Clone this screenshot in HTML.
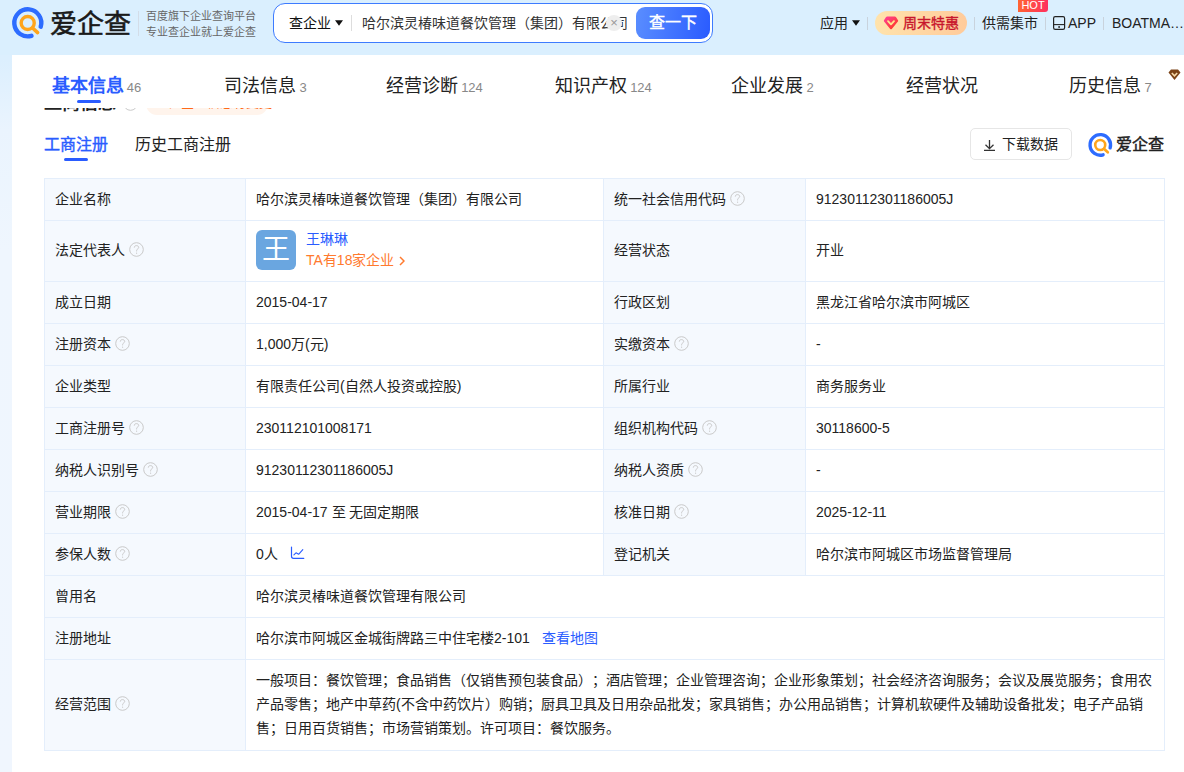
<!DOCTYPE html>
<html lang="zh-CN"><head><meta charset="utf-8">
<style>
*{box-sizing:border-box;margin:0;padding:0}
html,body{width:1184px;height:772px;overflow:hidden}
body{font-family:"Liberation Sans",sans-serif;font-size:14px;text-spacing-trim:space-all;color:#333;background:linear-gradient(180deg,#DAEFFE 0px,#DCEFFE 60px,#EAF4FE 130px,#EFF6FE 250px,#F0F6FE 772px);position:relative}
.abs{position:absolute;white-space:nowrap}
.hdr{position:absolute;left:0;top:0;width:1184px;height:55px;background:#DAEFFE}
.tag{left:146px;font-size:11px;color:#666;line-height:16px}
.search{left:273px;top:3px;width:440px;height:40px;border:1px solid #3D7BFF;border-radius:12px;background:#fff}
.btn{position:absolute;left:362px;top:3px;width:74px;height:32px;border-radius:9px;background:linear-gradient(100deg,#5A8EFF,#2A5BFF);color:#fff;font-size:16px;line-height:32px;text-align:center;-webkit-text-stroke:0.4px #fff}
.vd{position:absolute;width:1px;background:#C9D3DD}
.nav{top:14px;line-height:18px;color:#222;font-size:14px}
.card{position:absolute;left:12px;top:55px;width:1190px;height:720px;background:#fff}
.tabs{position:absolute;left:0;top:0;width:1184px;height:53px;background:#fff;z-index:2}
.tab{position:absolute;top:20px;width:169px;text-align:center;font-size:18px;line-height:22px;color:#222}
.tab small{font-size:13px;color:#888;margin-left:3px}
.tab.on{color:#2A5CFF;font-weight:bold}
table{position:absolute;left:32px;top:123px;border-collapse:collapse;table-layout:fixed;width:1120px}
td{border:1px solid #E4EEFB;padding:0 10px 2px;vertical-align:middle;line-height:20px;color:#222;white-space:nowrap}
td.l{background:#F5F9FE}
.q{display:inline-block;vertical-align:-2px;margin-left:4px}
</style></head><body>
<div class="hdr"></div>
<!-- logo -->
<svg class="abs" style="left:0;top:0" width="50" height="45" viewBox="0 0 50 45">
 <path d="M31.5 35.8 A13.5 13.5 0 1 1 40.7 26.75" fill="none" stroke="#2D6CFF" stroke-width="4.4" stroke-linecap="round"/>
 <circle cx="27.7" cy="23" r="6.55" fill="none" stroke="#FFA51C" stroke-width="3.4"/>
 <path d="M32.6 28 L37.6 32.6" stroke="#FFA51C" stroke-width="3.6" stroke-linecap="round"/>
</svg>
<div class="abs" style="left:50px;top:7px;font-size:27px;line-height:34px;color:#1A1A1A;-webkit-text-stroke:0.6px #1A1A1A;transform:scaleY(0.95);transform-origin:0 100%">爱企查</div>
<div class="vd" style="left:138px;top:11px;height:25px;background:#D3DDE8"></div>
<div class="abs tag" style="top:8px">百度旗下企业查询平台</div>
<div class="abs tag" style="top:24px">专业查企业就上爱企查</div>

<div class="abs search">
  <div class="abs" style="left:15px;top:10px;line-height:18px;color:#111">查企业</div>
  <div class="abs" style="left:61px;top:16px;line-height:0"><svg width="8" height="6" viewBox="0 0 8 6"><path d="M0 0.2 H8 L4 5.8 Z" fill="#111"/></svg></div>
  <div class="vd" style="left:77px;top:11px;height:16px;background:#DDD"></div>
  <div class="abs" style="left:88px;top:9px;line-height:20px;color:#333;width:265px;overflow:hidden">哈尔滨灵椿味道餐饮管理（集团）有限公司</div>
  <div class="abs" style="left:332px;top:11px;width:16px;height:16px;border-radius:50%;background:#EEE;color:#999;font-size:13px;line-height:16px;text-align:center">×</div>
  <div class="btn">查一下</div>
</div>

<div class="abs nav" style="left:820px">应用</div>
<div class="abs" style="left:852px;top:20px;line-height:0"><svg width="8" height="6" viewBox="0 0 8 6"><path d="M0 0.2 H8 L4 5.8 Z" fill="#111"/></svg></div>
<div class="vd" style="left:867px;top:17px;height:13px"></div>
<div class="abs" style="left:875px;top:11px;width:92px;height:24px;border-radius:12px;background:linear-gradient(90deg,#FFE3AC,#FFCB9B)"></div>
<svg class="abs" style="left:883px;top:16px" width="16" height="14" viewBox="0 0 16 14"><defs><linearGradient id="dg" x1="0" y1="0" x2="1" y2="1"><stop offset="0" stop-color="#FF3FA0"/><stop offset="1" stop-color="#FF3A10"/></linearGradient></defs><path d="M4.2 0.6 H11.8 Q12.6 0.6 13.1 1.3 L15 4.2 Q15.4 4.9 14.9 5.5 L8.8 12.9 Q8 13.8 7.2 12.9 L1.1 5.5 Q0.6 4.9 1 4.2 L2.9 1.3 Q3.4 0.6 4.2 0.6 Z" fill="url(#dg)"/><path d="M5 5.2 L8 8.4 L11 5.2" fill="none" stroke="#FFE68A" stroke-width="1.8" stroke-linecap="round" stroke-linejoin="round"/></svg>
<div class="abs nav" style="left:903px;color:#C8162C;-webkit-text-stroke:0.35px #C8162C">周末特惠</div>
<div class="vd" style="left:974px;top:17px;height:13px"></div>
<div class="abs nav" style="left:982px">供需集市</div>
<div class="abs" style="left:1018px;top:0;width:30px;height:12px;background:linear-gradient(90deg,#FF6433,#FF2F5F);border-radius:0 0 3px 0;color:#fff;font-size:11px;line-height:10px;text-align:center">HOT</div>
<div class="vd" style="left:1045px;top:17px;height:13px"></div>
<svg class="abs" style="left:1052px;top:16px" width="14" height="14" viewBox="0 0 14 14"><rect x="1.6" y="0.6" width="11" height="12.8" rx="1.6" fill="none" stroke="#222" stroke-width="1.2"/><line x1="1.6" y1="8.6" x2="12.6" y2="8.6" stroke="#222" stroke-width="1.1"/><circle cx="7.1" cy="11" r="0.9" fill="#222"/></svg>
<div class="abs nav" style="left:1068px">APP</div>
<div class="vd" style="left:1103px;top:17px;height:13px"></div>
<div class="abs nav" style="left:1112px">BOATMA…</div>

<div class="card">
  <!-- hidden section title -->
  <div class="abs" style="left:32px;top:37px;font-size:18px;line-height:22px;font-weight:bold;color:#222">工商信息</div>
  <div class="abs" style="left:134px;top:38px;width:122px;height:22px;border-radius:11px;background:#FFF4EC"></div><div class="abs" style="left:152px;top:39px;font-size:13px;line-height:18px;color:#FF6A1A;width:112px;overflow:hidden">◆ 企业信息有变更 ›</div><svg class="abs" style="left:111px;top:41px" width="15" height="15" viewBox="0 0 15 15"><circle cx="7.5" cy="7.5" r="6.8" fill="none" stroke="#C9C9C9" stroke-width="1"/></svg>

  <div class="abs" style="left:32px;top:79px;font-size:16px;line-height:22px;color:#2A5CFF;-webkit-text-stroke:0.4px #2A5CFF">工商注册</div>
  <div class="abs" style="left:52px;top:103px;width:24px;height:3px;border-radius:2px;background:#2A5CFF"></div>
  <div class="abs" style="left:123px;top:79px;font-size:16px;line-height:22px;color:#222">历史工商注册</div>
  <div class="abs" style="left:958px;top:73px;width:102px;height:32px;border:1px solid #E6E6E6;border-radius:5px;background:#fff"></div>
  <svg class="abs" style="left:971px;top:85px" width="13" height="11" viewBox="0 0 13 11"><path d="M6.5 0 V8.5 M2.5 4.8 L6.5 8.6 L10.5 4.8 M1 10.3 H12" fill="none" stroke="#333" stroke-width="1.3"/></svg>
  <div class="abs" style="left:990px;top:79px;font-size:14px;line-height:20px;color:#222">下载数据</div>
  <svg class="abs" style="left:1064px;top:73px" width="50" height="45" viewBox="0 0 50 45">
 <g transform="translate(24.3 16.9) scale(0.76) translate(-27.8 -22.8)">
 <path d="M31.5 35.8 A13.5 13.5 0 1 1 40.7 26.75" fill="none" stroke="#2D6CFF" stroke-width="4.4" stroke-linecap="round"/>
 <circle cx="27.7" cy="23" r="6.55" fill="none" stroke="#FFA51C" stroke-width="3.4"/>
 <path d="M32.6 28 L37.6 32.6" stroke="#FFA51C" stroke-width="3.6" stroke-linecap="round"/>
 </g>
</svg>
  <div class="abs" style="left:1104px;top:78px;font-size:16px;line-height:24px;color:#222;-webkit-text-stroke:0.45px #222">爱企查</div>
<table><colgroup><col style="width:201px"><col style="width:358px"><col style="width:202px"><col style="width:359px"></colgroup>
<tr style="height:42px"><td class="l">企业名称</td><td>哈尔滨灵椿味道餐饮管理（集团）有限公司</td><td class="l">统一社会信用代码<svg class="q" width="15" height="15" viewBox="0 0 15 15"><circle cx="7.5" cy="7.5" r="6.8" fill="none" stroke="#C9C9C9" stroke-width="1"/><path d="M5.3 5.6 C5.3 4.2 6.3 3.6 7.5 3.6 C8.8 3.6 9.7 4.4 9.7 5.5 C9.7 6.9 7.6 7 7.6 8.6 V9.4" fill="none" stroke="#C9C9C9" stroke-width="1"/><circle cx="7.6" cy="11.2" r="0.6" fill="#C9C9C9"/></svg></td><td>91230112301186005J</td></tr>
<tr style="height:61px"><td class="l">法定代表人<svg class="q" width="15" height="15" viewBox="0 0 15 15"><circle cx="7.5" cy="7.5" r="6.8" fill="none" stroke="#C9C9C9" stroke-width="1"/><path d="M5.3 5.6 C5.3 4.2 6.3 3.6 7.5 3.6 C8.8 3.6 9.7 4.4 9.7 5.5 C9.7 6.9 7.6 7 7.6 8.6 V9.4" fill="none" stroke="#C9C9C9" stroke-width="1"/><circle cx="7.6" cy="11.2" r="0.6" fill="#C9C9C9"/></svg></td><td><div style="position:relative;height:40px"><div class="abs" style="left:0;top:0;width:40px;height:40px;border-radius:6px;background:#6AA6E0;color:#fff;font-size:28px;line-height:40px;text-align:center">王</div><div class="abs" style="left:50px;top:-1px;line-height:20px;color:#2A5CFF">王琳琳</div><div class="abs" style="left:50px;top:20px;line-height:20px;color:#FF7A2E">TA有18家企业<svg style="margin-left:5px;vertical-align:-1px" width="6" height="10" viewBox="0 0 6 10"><path d="M1 1 L5 5 L1 9" fill="none" stroke="#FF7A2E" stroke-width="1.5"/></svg></div></div></td><td class="l">经营状态</td><td>开业</td></tr>
<tr style="height:42px"><td class="l">成立日期</td><td>2015-04-17</td><td class="l">行政区划</td><td>黑龙江省哈尔滨市阿城区</td></tr>
<tr style="height:42px"><td class="l">注册资本<svg class="q" width="15" height="15" viewBox="0 0 15 15"><circle cx="7.5" cy="7.5" r="6.8" fill="none" stroke="#C9C9C9" stroke-width="1"/><path d="M5.3 5.6 C5.3 4.2 6.3 3.6 7.5 3.6 C8.8 3.6 9.7 4.4 9.7 5.5 C9.7 6.9 7.6 7 7.6 8.6 V9.4" fill="none" stroke="#C9C9C9" stroke-width="1"/><circle cx="7.6" cy="11.2" r="0.6" fill="#C9C9C9"/></svg></td><td>1,000万(元)</td><td class="l">实缴资本<svg class="q" width="15" height="15" viewBox="0 0 15 15"><circle cx="7.5" cy="7.5" r="6.8" fill="none" stroke="#C9C9C9" stroke-width="1"/><path d="M5.3 5.6 C5.3 4.2 6.3 3.6 7.5 3.6 C8.8 3.6 9.7 4.4 9.7 5.5 C9.7 6.9 7.6 7 7.6 8.6 V9.4" fill="none" stroke="#C9C9C9" stroke-width="1"/><circle cx="7.6" cy="11.2" r="0.6" fill="#C9C9C9"/></svg></td><td>-</td></tr>
<tr style="height:42px"><td class="l">企业类型</td><td>有限责任公司(自然人投资或控股)</td><td class="l">所属行业</td><td>商务服务业</td></tr>
<tr style="height:42px"><td class="l">工商注册号<svg class="q" width="15" height="15" viewBox="0 0 15 15"><circle cx="7.5" cy="7.5" r="6.8" fill="none" stroke="#C9C9C9" stroke-width="1"/><path d="M5.3 5.6 C5.3 4.2 6.3 3.6 7.5 3.6 C8.8 3.6 9.7 4.4 9.7 5.5 C9.7 6.9 7.6 7 7.6 8.6 V9.4" fill="none" stroke="#C9C9C9" stroke-width="1"/><circle cx="7.6" cy="11.2" r="0.6" fill="#C9C9C9"/></svg></td><td>230112101008171</td><td class="l">组织机构代码<svg class="q" width="15" height="15" viewBox="0 0 15 15"><circle cx="7.5" cy="7.5" r="6.8" fill="none" stroke="#C9C9C9" stroke-width="1"/><path d="M5.3 5.6 C5.3 4.2 6.3 3.6 7.5 3.6 C8.8 3.6 9.7 4.4 9.7 5.5 C9.7 6.9 7.6 7 7.6 8.6 V9.4" fill="none" stroke="#C9C9C9" stroke-width="1"/><circle cx="7.6" cy="11.2" r="0.6" fill="#C9C9C9"/></svg></td><td>30118600-5</td></tr>
<tr style="height:42px"><td class="l">纳税人识别号<svg class="q" width="15" height="15" viewBox="0 0 15 15"><circle cx="7.5" cy="7.5" r="6.8" fill="none" stroke="#C9C9C9" stroke-width="1"/><path d="M5.3 5.6 C5.3 4.2 6.3 3.6 7.5 3.6 C8.8 3.6 9.7 4.4 9.7 5.5 C9.7 6.9 7.6 7 7.6 8.6 V9.4" fill="none" stroke="#C9C9C9" stroke-width="1"/><circle cx="7.6" cy="11.2" r="0.6" fill="#C9C9C9"/></svg></td><td>91230112301186005J</td><td class="l">纳税人资质<svg class="q" width="15" height="15" viewBox="0 0 15 15"><circle cx="7.5" cy="7.5" r="6.8" fill="none" stroke="#C9C9C9" stroke-width="1"/><path d="M5.3 5.6 C5.3 4.2 6.3 3.6 7.5 3.6 C8.8 3.6 9.7 4.4 9.7 5.5 C9.7 6.9 7.6 7 7.6 8.6 V9.4" fill="none" stroke="#C9C9C9" stroke-width="1"/><circle cx="7.6" cy="11.2" r="0.6" fill="#C9C9C9"/></svg></td><td>-</td></tr>
<tr style="height:42px"><td class="l">营业期限<svg class="q" width="15" height="15" viewBox="0 0 15 15"><circle cx="7.5" cy="7.5" r="6.8" fill="none" stroke="#C9C9C9" stroke-width="1"/><path d="M5.3 5.6 C5.3 4.2 6.3 3.6 7.5 3.6 C8.8 3.6 9.7 4.4 9.7 5.5 C9.7 6.9 7.6 7 7.6 8.6 V9.4" fill="none" stroke="#C9C9C9" stroke-width="1"/><circle cx="7.6" cy="11.2" r="0.6" fill="#C9C9C9"/></svg></td><td>2015-04-17 至 无固定期限</td><td class="l">核准日期<svg class="q" width="15" height="15" viewBox="0 0 15 15"><circle cx="7.5" cy="7.5" r="6.8" fill="none" stroke="#C9C9C9" stroke-width="1"/><path d="M5.3 5.6 C5.3 4.2 6.3 3.6 7.5 3.6 C8.8 3.6 9.7 4.4 9.7 5.5 C9.7 6.9 7.6 7 7.6 8.6 V9.4" fill="none" stroke="#C9C9C9" stroke-width="1"/><circle cx="7.6" cy="11.2" r="0.6" fill="#C9C9C9"/></svg></td><td>2025-12-11</td></tr>
<tr style="height:42px"><td class="l">参保人数<svg class="q" width="15" height="15" viewBox="0 0 15 15"><circle cx="7.5" cy="7.5" r="6.8" fill="none" stroke="#C9C9C9" stroke-width="1"/><path d="M5.3 5.6 C5.3 4.2 6.3 3.6 7.5 3.6 C8.8 3.6 9.7 4.4 9.7 5.5 C9.7 6.9 7.6 7 7.6 8.6 V9.4" fill="none" stroke="#C9C9C9" stroke-width="1"/><circle cx="7.6" cy="11.2" r="0.6" fill="#C9C9C9"/></svg></td><td>0人 <svg style="vertical-align:-1px;margin-left:8px" width="15" height="14" viewBox="0 0 15 14"><path d="M1.5 1 V10.3 Q1.5 12.3 3.5 12.3 H13.8" fill="none" stroke="#2A5CFF" stroke-width="1.2" stroke-linecap="round"/><path d="M3.9 8.9 L6 6.8 L8.6 8.3 L12.8 3.6" fill="none" stroke="#2A5CFF" stroke-width="1.1" stroke-linecap="round" stroke-linejoin="round"/></svg></td><td class="l">登记机关</td><td>哈尔滨市阿城区市场监督管理局</td></tr>
<tr style="height:42px"><td class="l">曾用名</td><td colspan="3">哈尔滨灵椿味道餐饮管理有限公司</td></tr>
<tr style="height:42px"><td class="l">注册地址</td><td colspan="3">哈尔滨市阿城区金城街牌路三中住宅楼2-101<span style="color:#2A5CFF;margin-left:12px">查看地图</span></td></tr>
<tr style="height:91px"><td class="l">经营范围<svg class="q" width="15" height="15" viewBox="0 0 15 15"><circle cx="7.5" cy="7.5" r="6.8" fill="none" stroke="#C9C9C9" stroke-width="1"/><path d="M5.3 5.6 C5.3 4.2 6.3 3.6 7.5 3.6 C8.8 3.6 9.7 4.4 9.7 5.5 C9.7 6.9 7.6 7 7.6 8.6 V9.4" fill="none" stroke="#C9C9C9" stroke-width="1"/><circle cx="7.6" cy="11.2" r="0.6" fill="#C9C9C9"/></svg></td><td colspan="3" style="line-height:24px">一般项目：餐饮管理；食品销售（仅销售预包装食品）；酒店管理；企业管理咨询；企业形象策划；社会经济咨询服务；会议及展览服务；食用农<br>产品零售；地产中草药(不含中药饮片）购销；厨具卫具及日用杂品批发；家具销售；办公用品销售；计算机软硬件及辅助设备批发；电子产品销<br>售；日用百货销售；市场营销策划。许可项目：餐饮服务。</td></tr>
</table>
  <div class="tabs">
    <div class="tab on" style="left:0">基本信息<small style="font-weight:normal">46</small></div>
    <div class="tab" style="left:169px">司法信息<small>3</small></div>
    <div class="tab" style="left:338px">经营诊断<small>124</small></div>
    <div class="tab" style="left:507px">知识产权<small>124</small></div>
    <div class="tab" style="left:676px">企业发展<small>2</small></div>
    <div class="tab" style="left:845px">经营状况</div>
    <div class="tab" style="left:1014px">历史信息<small>7</small></div>
    <div class="abs" style="left:65px;top:45px;width:24px;height:3px;border-radius:2px;background:#2A5CFF"></div>
  </div>
</div>
<svg class="abs" style="left:1167.5px;top:68.5px;z-index:3" width="13" height="12" viewBox="0 0 13 12"><path d="M3 0.5 H10 L12.5 3.5 L6.5 11 L0.5 3.5 Z" fill="#7B4316"/><path d="M3.8 4 L6.5 6.8 L9.2 4" fill="none" stroke="#F6D9A8" stroke-width="1.6"/></svg>
</body></html>
